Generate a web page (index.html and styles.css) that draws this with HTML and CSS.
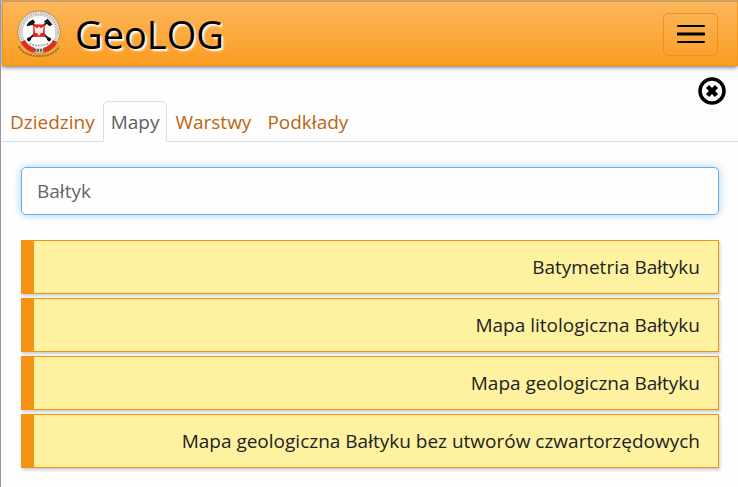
FILE: index.html
```html
<!DOCTYPE html>
<html lang="pl">

<head>
    <meta charset="UTF-8">
    <meta name="viewport" content="width=device-width, initial-scale=1.0">
    <title>GeoLOG</title>
    <link rel="stylesheet" href="styles.css">
</head>

<body>
    <header class="navbar">
        <a class="brand" href="#">
            <svg class="logo" viewBox="0 0 46 50" aria-hidden="true">
                <circle cx="23" cy="23" r="22" fill="#f4f1ec" stroke="#a8885c" stroke-width="1"/>
                <circle cx="23" cy="23" r="19.5" fill="none" stroke="#b9b6af" stroke-width="2.500" stroke-dasharray="1.5 1"/>
                <circle cx="23" cy="23" r="17.5" fill="#fff" stroke="#c8c4bc" stroke-width="1"/>
                <path d="M6 32.5A19.500 19.500 0 0 0 18 42M28 42A19.500 19.500 0 0 0 40 32.500" fill="none" stroke="#e02d20" stroke-width="5"/>
                <path d="M13 35q10 4 20 0" fill="none" stroke="#aaa" stroke-width="2" stroke-dasharray="2 1"/>
                <path d="M18 42h10" stroke="#655d50" stroke-width="3" stroke-dasharray="2 1"/>
                <path d="M2 38Q8 48 23 48T44 38" fill="none" stroke="#8a6c40" stroke-width="2" stroke-dasharray="2 1"/>
                <path d="M15 13L34 31M31 13L12 31" stroke="#222" stroke-width="2"/>
                <path d="M10 17q1-5 7-7l2 3-4 3zM28 12l4-3 5 6-3 2zM10 30l3-2 2 3-3 2zM36 30l-3-2-2 3 3 2z" fill="#111"/>
                <path d="M17 15h12v13H17z" fill="#e5251d"/>
                <path d="M18 17l3 2 2-2 2 2 3-2-1 7-2 0-2 3-2-3-2 0z" fill="#fbe9e6"/>
            </svg>
            <span class="brand-name">GeoLOG</span>
        </a>
        <button class="menu-btn" type="button" aria-label="Menu">
            <svg width="28" height="18" viewBox="0 0 28 18" aria-hidden="true">
                <path d="M1 1h26M1 17h26" stroke="#000" stroke-width="2" stroke-linecap="round"/>
                <path d="M1 9h26" stroke="#000" stroke-width="3" stroke-linecap="round"/>
            </svg>
        </button>
    </header>

    <main>
        <div class="close-row">
            <button class="close-btn" type="button" aria-label="Zamknij">
                <svg width="28" height="28" viewBox="0 0 28 28" aria-hidden="true">
                    <circle cx="14" cy="14" r="12" fill="none" stroke="#000" stroke-width="3.500"/>
                    <path d="M9.500 9.500l9 9M18.500 9.500l-9 9" stroke="#000" stroke-width="4.500"/>
                </svg>
            </button>
        </div>

        <nav class="tabs">
            <a href="#">Dziedziny</a>
            <a class="active" href="#" aria-current="page">Mapy</a>
            <a href="#">Warstwy</a>
            <a href="#">Podkłady</a>
        </nav>

        <div class="content">
            <input class="search" type="text" value="Bałtyk" aria-label="Szukaj mapy">

            <div class="map-list">
                <button type="button">Batymetria Bałtyku</button>
                <button type="button">Mapa litologiczna Bałtyku</button>
                <button type="button">Mapa geologiczna Bałtyku</button>
                <button type="button">Mapa geologiczna Bałtyku bez utworów czwartorzędowych</button>
            </div>
        </div>
    </main>
</body>

</html>
```
FILE: styles.css
```css
* {
    box-sizing: border-box;
}

body {
    margin: 0;
    min-height: 100vh;
    border-top: 1px solid #aaa;
    border-left: 1px solid #999;
    padding-left: 1px;
    background-color: #fefefe;
    color: #222;
    font-family: "Open Sans", sans-serif;
    font-size: 19px;
    line-height: 26px;
}

button,
input {
    font: inherit;
}

.navbar {
    display: flex;
    align-items: center;
    justify-content: space-between;
    padding: 8px 19px 7px 13px;
    border: 1px solid #f2941c;
    background: linear-gradient(#fdb75b, #fa9d23);
    box-shadow: 0 1px 5px rgba(0, 0, 0, 0.6);
}

.brand {
    display: flex;
    align-items: center;
    gap: 13px;
    color: #000;
    text-decoration: none;
}

.logo {
    width: 46px;
    height: 48px;
}

.brand-name {
    font-size: 38px;
    line-height: 48px;
    text-shadow: 2px 2px 2px #fff;
}

.menu-btn {
    display: flex;
    align-items: center;
    justify-content: center;
    width: 55px;
    height: 43px;
    padding: 0;
    border: 1px solid #f28f14;
    border-radius: 5px;
    background: none;
    cursor: pointer;
}

.close-row {
    display: flex;
    justify-content: flex-end;
    padding: 11px 12px 0;
}

.close-btn {
    display: flex;
    padding: 0;
    border: none;
    background: none;
    cursor: pointer;
}

.tabs {
    display: flex;
    margin-top: -4px;
    border-bottom: 1px solid #ddd;
}

.tabs a {
    margin-bottom: -1px;
    padding: 7px 7px 6px;
    border: 1px solid transparent;
    border-radius: 5px 5px 0 0;
    color: #bd6511;
    text-decoration: none;
}

.tabs .active {
    border-color: #ddd;
    border-bottom-color: #fefefe;
    background-color: #fefefe;
    color: #606060;
}

.content {
    padding: 25px 19px 18px;
}

.search {
    display: block;
    width: 100%;
    height: 48px;
    padding: 8px 15px;
    border: 1px solid #66afe9;
    border-radius: 5px;
    outline: none;
    background-color: #fefefe;
    color: #666;
    box-shadow: 0 0 8px rgba(102, 175, 233, 0.6);
}

.map-list {
    display: flex;
    flex-direction: column;
    gap: 4px;
    margin-top: 25px;
}

.map-list button {
    padding: 13px 18px;
    border: 1px solid #f39214;
    border-left-width: 13px;
    background-color: #fef2a0;
    color: #222;
    text-align: right;
    box-shadow: 1px 2px 3px rgba(0, 0, 0, 0.2);
    cursor: pointer;
}
```
